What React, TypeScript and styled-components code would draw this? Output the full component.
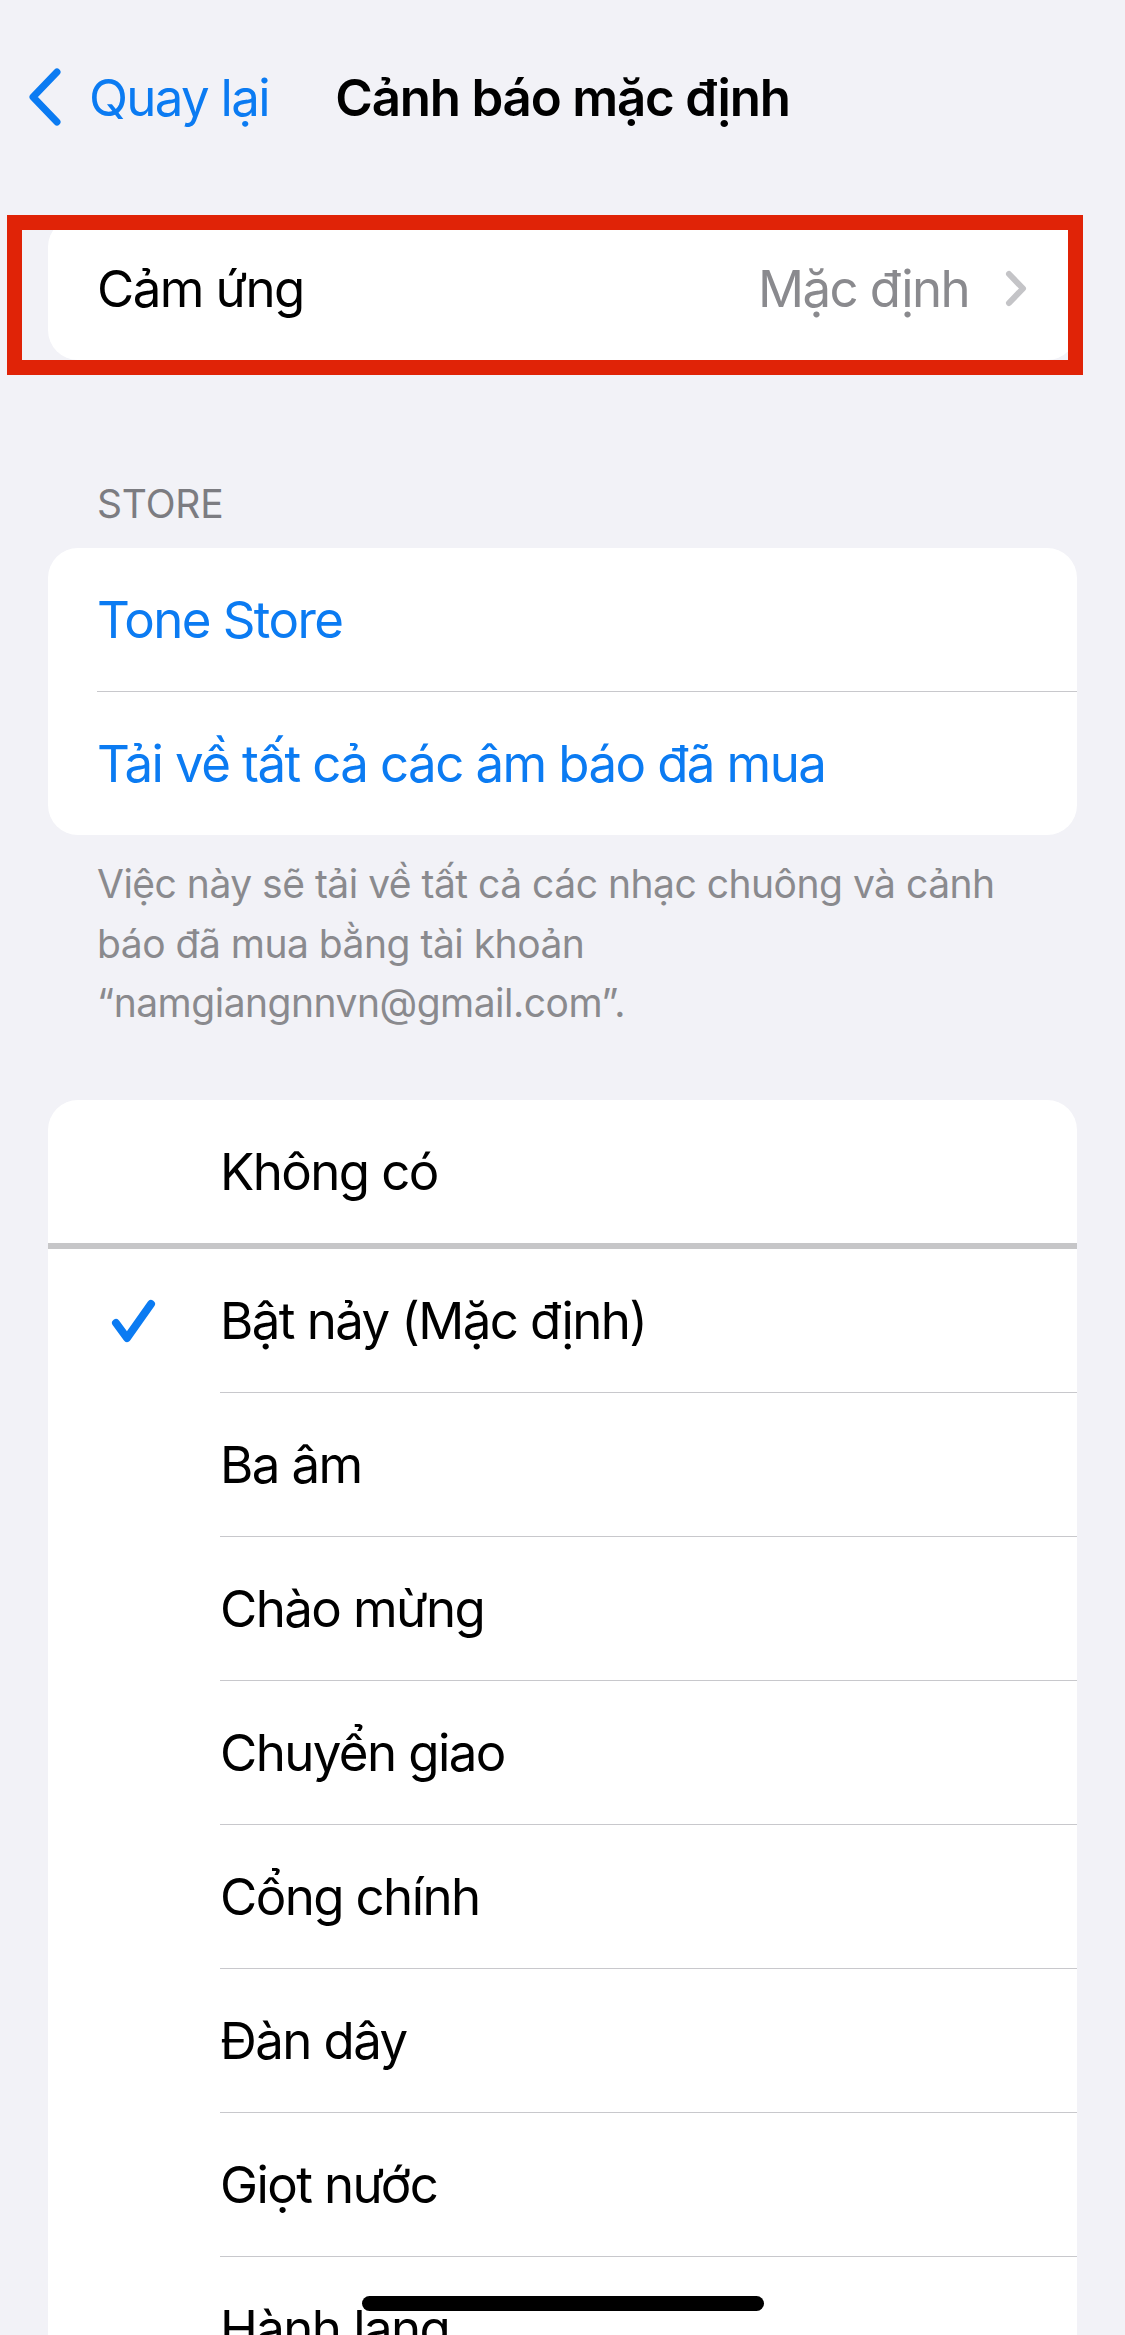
import React from "react";
import styled, { createGlobalStyle } from "styled-components";

const GlobalStyle = createGlobalStyle`
  html, body {
    margin: 0;
    padding: 0;
    background: #f2f2f7;
  }
  body {
    font-family: Inter, "Liberation Sans", "Noto Sans", sans-serif;
    -webkit-font-smoothing: antialiased;
  }
`;

const BLUE = "#0b7bf2";

const Screen = styled.div`
  position: relative;
  width: 1125px;
  height: 2335px;
  overflow: hidden;
  box-sizing: border-box;
  padding-top: 31px;
  background: #f2f2f7;
`;

const NavBar = styled.header`
  height: 132px;
  display: grid;
  grid-template-columns: 1fr auto 1fr;
  align-items: center;
  padding: 0 28px;
`;

const BackButton = styled.div`
  display: flex;
  align-items: center;
  gap: 27px;
  color: ${BLUE};
  font-size: 51px;
  letter-spacing: -1.7px;
`;

const NavTitle = styled.h1`
  margin: 0;
  font-size: 51px;
  font-weight: 600;
  letter-spacing: -1.2px;
  color: #000;
`;

const Content = styled.main`
  padding: 0 48px;
`;

const HighlightWrap = styled.section`
  position: relative;
  margin-top: 54px;
`;

// red annotation frame drawn over the first group
const HighlightFrame = styled.div`
  position: absolute;
  top: -2px;
  left: -41px;
  right: -6px;
  bottom: -15px;
  border: 15px solid #e02307;
  pointer-events: none;
`;

const Card = styled.div<{ $gap?: number }>`
  margin-top: ${(p) => p.$gap ?? 0}px;
  background: #fff;
  border-radius: 30px;
  overflow: hidden;
`;

const Row = styled.div<{ $inset: number }>`
  display: flex;
  align-items: stretch;
  padding-left: ${(p) => p.$inset}px;
`;

const RowBody = styled.div<{ $divider?: boolean; $color?: string }>`
  flex: 1;
  height: 143px;
  display: flex;
  align-items: center;
  padding-right: 50px;
  font-size: 51px;
  letter-spacing: -1.6px;
  color: ${(p) => p.$color ?? "#000"};
  border-bottom: ${(p) => (p.$divider ? "1px solid #c8c8cc" : "none")};
`;

const Label = styled.span`
  flex: 1;
  white-space: nowrap;
`;

const Value = styled.span`
  color: #8a8a8e;
  margin-right: 36px;
`;

const SectionHeader = styled.div`
  margin: 121px 0 21px;
  padding-left: 49px;
  font-size: 39px;
  line-height: 46px;
  letter-spacing: -0.2px;
  color: #7c7c81;
`;

const SectionFooter = styled.p`
  margin: 0;
  padding: 19px 48px 0 49px;
  font-size: 39px;
  line-height: 59.5px;
  letter-spacing: -0.5px;
  color: #8a8a8e;
`;

const NoneRow = styled.div`
  height: 143px;
  display: flex;
  align-items: center;
  padding-left: 172px;
  font-size: 51px;
  letter-spacing: -1.6px;
  border-bottom: 6px solid #c6c6c8;
`;

const ToneRow = styled.div`
  display: flex;
`;

const CheckCell = styled.div`
  width: 172px;
  flex-shrink: 0;
  display: flex;
  align-items: center;
  padding-left: 62px;
  box-sizing: border-box;
`;

const HomeIndicator = styled.div`
  position: absolute;
  left: 362px;
  bottom: 24px;
  width: 402px;
  height: 15px;
  border-radius: 8px;
  background: #000;
`;

const BackChevron = () => (
  <svg width="34" height="58" viewBox="0 0 34 58">
    <path
      d="M29 4 L5 29 L29 54"
      fill="none"
      stroke={BLUE}
      strokeWidth="7"
      strokeLinecap="round"
      strokeLinejoin="round"
    />
  </svg>
);

const DisclosureChevron = () => (
  <svg width="22" height="37" viewBox="0 0 22 37">
    <path
      d="M4 4 L18 18.5 L4 33"
      fill="none"
      stroke="#c4c4c7"
      strokeWidth="6"
      strokeLinecap="round"
      strokeLinejoin="round"
    />
  </svg>
);

const Checkmark = () => (
  <svg width="46" height="46" viewBox="0 0 46 46">
    <path
      d="M6 25 L17 40 L41 6"
      fill="none"
      stroke={BLUE}
      strokeWidth="8"
      strokeLinecap="round"
      strokeLinejoin="round"
    />
  </svg>
);

const tones = [
  "Bật nảy (Mặc định)",
  "Ba âm",
  "Chào mừng",
  "Chuyển giao",
  "Cổng chính",
  "Đàn dây",
  "Giọt nước",
  "Hành lang",
];

const App = () => {
  const selected = 0;

  return (
    <Screen>
      <GlobalStyle />
      <NavBar>
        <BackButton>
          <BackChevron />
          <span>Quay lại</span>
        </BackButton>
        <NavTitle>Cảnh báo mặc định</NavTitle>
        <div />
      </NavBar>

      <Content>
        <HighlightWrap>
          <Card>
            <Row $inset={49}>
              <RowBody>
                <Label>Cảm ứng</Label>
                <Value>Mặc định</Value>
                <DisclosureChevron />
              </RowBody>
            </Row>
          </Card>
          <HighlightFrame />
        </HighlightWrap>

        <SectionHeader>STORE</SectionHeader>
        <Card>
          <Row $inset={49}>
            <RowBody $divider $color={BLUE}>
              <Label>Tone Store</Label>
            </RowBody>
          </Row>
          <Row $inset={49}>
            <RowBody $color={BLUE}>
              <Label>Tải về tất cả các âm báo đã mua</Label>
            </RowBody>
          </Row>
        </Card>
        <SectionFooter>
          Việc này sẽ tải về tất cả các nhạc chuông và cảnh báo đã mua bằng tài
          khoản “namgiangnnvn@gmail.com”.
        </SectionFooter>

        <Card $gap={67}>
          <NoneRow>Không có</NoneRow>
          {tones.map((name, i) => (
            <ToneRow key={name}>
              <CheckCell>{i === selected && <Checkmark />}</CheckCell>
              <RowBody $divider={i < tones.length - 1}>
                <Label>{name}</Label>
              </RowBody>
            </ToneRow>
          ))}
        </Card>
      </Content>

      <HomeIndicator />
    </Screen>
  );
};

export default App;
